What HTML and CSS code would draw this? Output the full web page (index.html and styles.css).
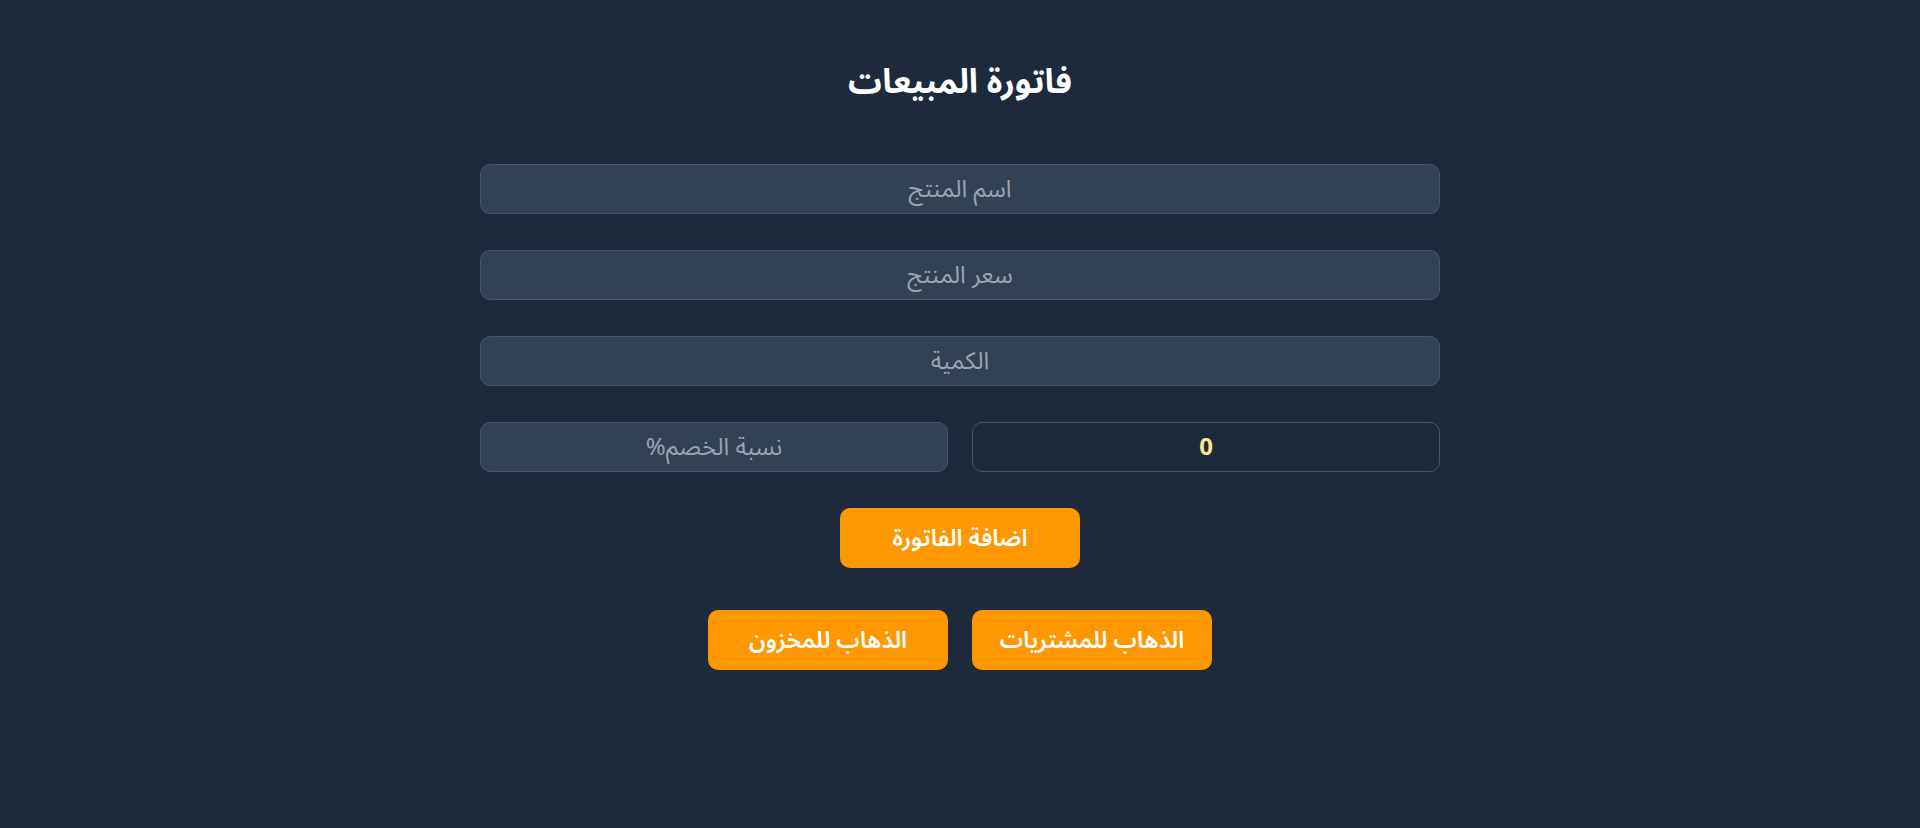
FILE: index.html
```html
<!DOCTYPE html>
<html lang="ar" dir="rtl">
<head>
<meta charset="utf-8">
<title>فاتورة المبيعات</title>
<link rel="stylesheet" href="styles.css">
</head>
<body>
<main class="page">
  <h1 class="title">فاتورة المبيعات</h1>
  <form class="form">
    <input class="field" type="text" placeholder="اسم المنتج">
    <input class="field" type="text" placeholder="سعر المنتج">
    <input class="field" type="text" placeholder="الكمية">
    <div class="row">
      <input class="field field-total" type="text" value="0" readonly>
      <input class="field" type="text" placeholder="نسبة الخصم%">
    </div>
    <div class="actions">
      <button type="button" class="btn">اضافة الفاتورة</button>
    </div>
    <div class="actions nav">
      <button type="button" class="btn">الذهاب للمشتريات</button>
      <button type="button" class="btn">الذهاب للمخزون</button>
    </div>
  </form>
</main>
</body>
</html>
```
FILE: styles.css
```css
* { box-sizing: border-box; }
html, body {
  margin: 0;
  padding: 0;
  background: #1e293b;
  height: 100%;
}
body {
  font-family: "Noto Sans Arabic", "Noto Sans Arabic UI", "Noto Sans", sans-serif;
  color: #fff;
}
.page {
  width: 960px;
  margin: 0 auto;
  padding-top: 60px;
}
.title {
  margin: 0;
  text-align: center;
  font-size: 33.5px;
  font-weight: bold;
  line-height: 46px;
  color: #fff;
}
.form {
  margin-top: 58px;
  display: flex;
  flex-direction: column;
  gap: 36px;
}
.field {
  display: block;
  width: 100%;
  height: 50px;
  padding: 0 12px;
  background: #334155;
  border: 1px solid #475569;
  border-radius: 10px;
  text-align: center;
  font-family: "Noto Sans Arabic", "Noto Sans Arabic UI", "Noto Sans", sans-serif;
  font-size: 24px;
  color: #fff;
  outline: none;
}
.field::placeholder { color: #9ca3af; }
.row {
  display: flex;
  gap: 24px;
}
.row .field { flex: 1; }
.field-total {
  background: #1e293b;
  color: #fde68a;
  font-weight: bold;
}
.actions {
  display: flex;
  justify-content: center;
  gap: 24px;
}
.nav { margin-top: 6px; }
.btn {
  width: 240px;
  height: 60px;
  border: none;
  border-radius: 10px;
  background: #ff9800;
  color: #fff;
  font-family: "Noto Sans Arabic", "Noto Sans Arabic UI", "Noto Sans", sans-serif;
  font-size: 23.3px;
  font-weight: 600;
  cursor: pointer;
}
```
